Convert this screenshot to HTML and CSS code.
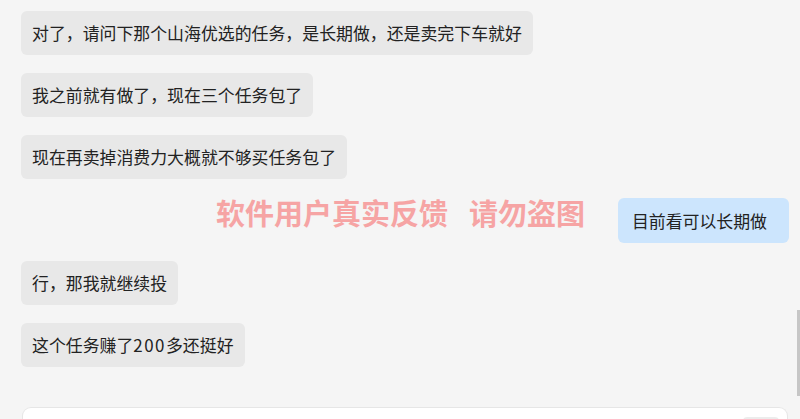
FILE: index.html
```html
<!DOCTYPE html>
<html lang="zh-CN">
<head>
<meta charset="utf-8">
<link rel="stylesheet" href="styles.css">
</head>
<body>
<div class="page">
  <div class="chat">
    <div class="msg left"><div class="bubble">对了，请问下那个山海优选的任务，是长期做，还是卖完下车就好</div></div>
    <div class="msg left"><div class="bubble">我之前就有做了，现在三个任务包了</div></div>
    <div class="msg left"><div class="bubble">现在再卖掉消费力大概就不够买任务包了</div></div>
    <div class="msg right"><div class="bubble mine">目前看可以长期做</div></div>
    <div class="msg left"><div class="bubble">行，那我就继续投</div></div>
    <div class="msg left"><div class="bubble">这个任务赚了<span class="num">200</span>多还挺好</div></div>
  </div>
  <div class="composer"><div class="composer-btn"></div></div>
  <div class="watermark">软件用户真实反馈<span class="wm-gap"></span>请勿盗图</div>
  <div class="scrollbar"></div>
</div>
</body>
</html>
```

FILE: styles.css
```css
html, body {
  margin: 0;
  padding: 0;
  background: #f5f5f5;
  overflow: hidden;
}
.page {
  position: relative;
  width: 800px;
  height: 419px;
  overflow: hidden;
  font-family: "Noto Sans CJK SC", "Noto Sans", sans-serif;
  color: #222;
}
.chat {
  display: flex;
  flex-direction: column;
  gap: 18.2px;
  padding: 11px 11px 0 21px;
}
.msg {
  display: flex;
}
.msg.right {
  justify-content: flex-end;
}
.bubble {
  background: #e8e8e8;
  border-radius: 6px;
  font-size: 16.9px;
  line-height: 24px;
  padding: 10px 11px;
  white-space: nowrap;
}
.num {
  letter-spacing: 1.5px;
}
.bubble.mine {
  background: #cce5fd;
  padding: 11px 22px 10px 14px;
}
.composer {
  margin: 40px 12px 0 22px;
  height: 30px;
  background: #fff;
  border: 1px solid #e6e6e6;
  border-bottom: none;
  border-radius: 9px 9px 0 0;
  position: relative;
}
.composer-btn {
  position: absolute;
  right: 8px;
  top: 9px;
  width: 36px;
  height: 20px;
  border-radius: 4px;
  background: #ececec;
}
.watermark {
  position: absolute;
  left: 216px;
  top: 194px;
  font-size: 29px;
  line-height: 36px;
  font-weight: 700;
  color: #f6a4a4;
  white-space: nowrap;
}
.wm-gap {
  display: inline-block;
  width: 21px;
}
.scrollbar {
  position: absolute;
  left: 797px;
  top: 310px;
  width: 3px;
  height: 86px;
  background: #c6c6c6;
}
```
